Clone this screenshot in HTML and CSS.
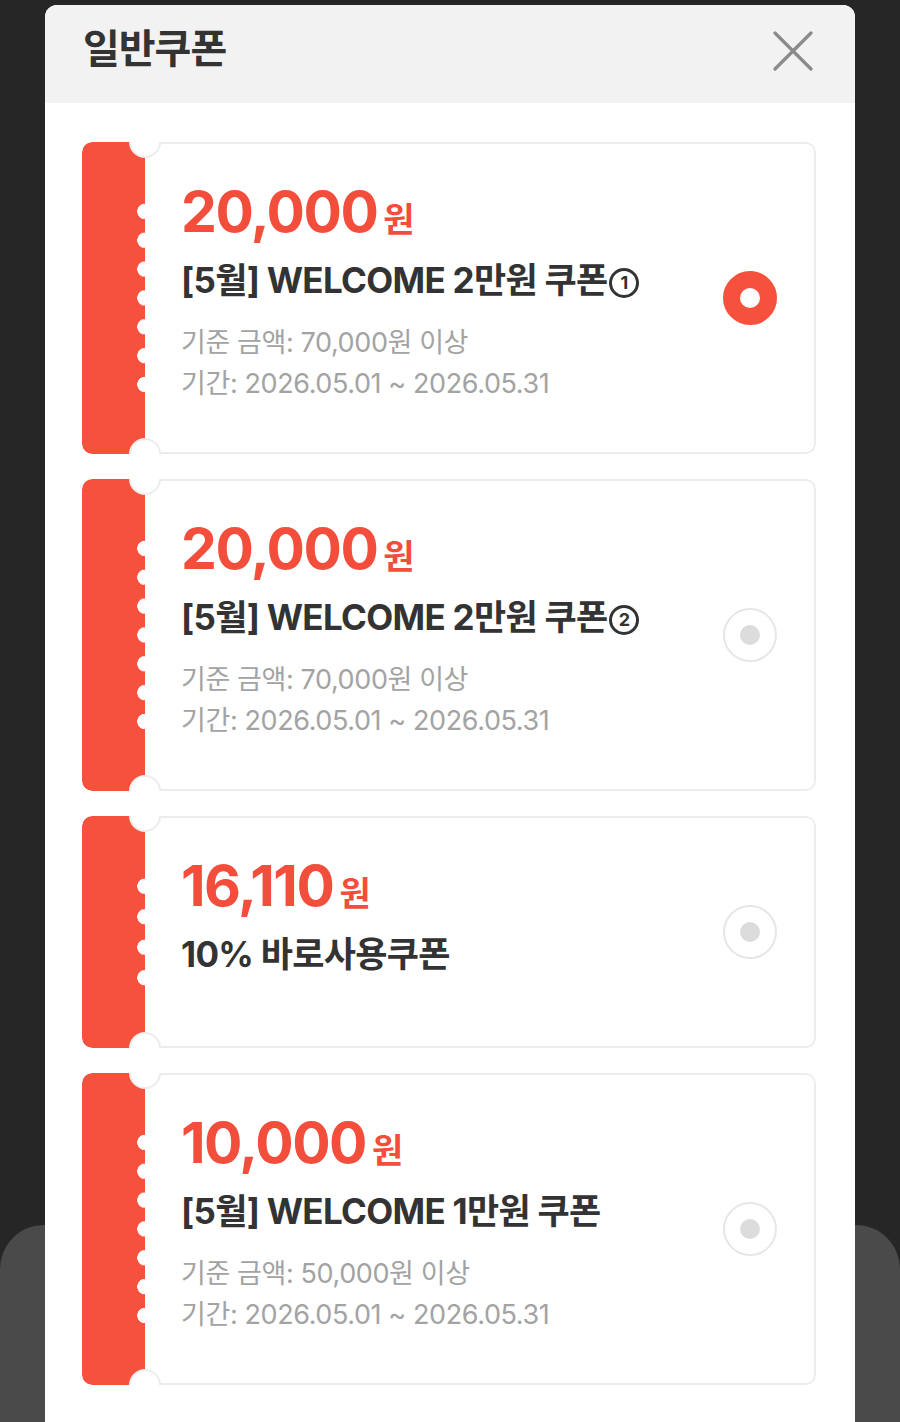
FILE: index.html
```html
<!DOCTYPE html>
<html lang="ko">
<head>
  <meta charset="UTF-8" />
  <meta name="viewport" content="width=device-width, initial-scale=1.0"/>
  <title>일반쿠폰</title>
  <link rel="stylesheet" href="styles.css">
</head>
<body>
  <div class="sheet-behind"></div>

  <div class="modal">
    <header class="modal-header">
      <h2>일반쿠폰</h2>
      <button class="close-btn" aria-label="닫기">
        <svg width="40" height="40" viewBox="0 0 40 40">
          <path d="M2 2 L38 38 M38 2 L2 38" stroke="#8a8a8a" stroke-width="3.2" stroke-linecap="round" fill="none"/>
        </svg>
      </button>
    </header>

    <div class="coupon-list">
      <label class="coupon">
        <div class="stub"></div>
        <div class="coupon-body">
          <div class="coupon-info">
            <div class="amount">20,000<span class="won">원</span></div>
            <div class="coupon-name">[5월] WELCOME 2만원 쿠폰<span class="circled">1</span></div>
            <div class="coupon-meta">
              <p>기준 금액: 70,000원 이상</p>
              <p>기간: 2026.05.01 ~ 2026.05.31</p>
            </div>
          </div>
          <span class="radio checked"></span>
        </div>
      </label>

      <label class="coupon">
        <div class="stub"></div>
        <div class="coupon-body">
          <div class="coupon-info">
            <div class="amount">20,000<span class="won">원</span></div>
            <div class="coupon-name">[5월] WELCOME 2만원 쿠폰<span class="circled">2</span></div>
            <div class="coupon-meta">
              <p>기준 금액: 70,000원 이상</p>
              <p>기간: 2026.05.01 ~ 2026.05.31</p>
            </div>
          </div>
          <span class="radio"></span>
        </div>
      </label>

      <label class="coupon">
        <div class="stub"></div>
        <div class="coupon-body">
          <div class="coupon-info">
            <div class="amount">16,110<span class="won">원</span></div>
            <div class="coupon-name">10% 바로사용쿠폰</div>
            <div class="coupon-meta"></div>
          </div>
          <span class="radio"></span>
        </div>
      </label>

      <label class="coupon">
        <div class="stub"></div>
        <div class="coupon-body">
          <div class="coupon-info">
            <div class="amount">10,000<span class="won">원</span></div>
            <div class="coupon-name">[5월] WELCOME 1만원 쿠폰</div>
            <div class="coupon-meta">
              <p>기준 금액: 50,000원 이상</p>
              <p>기간: 2026.05.01 ~ 2026.05.31</p>
            </div>
          </div>
          <span class="radio"></span>
        </div>
      </label>
    </div>
  </div>
</body>
</html>
```

FILE: styles.css
```css
body {
  margin: 0;
  height: 1422px;
  overflow: hidden;
  position: relative;
  background: #262626;
  font-family: Inter, "Noto Sans CJK KR", sans-serif;
  color: #333;
}

.sheet-behind {
  position: absolute;
  left: 0;
  right: 0;
  top: 1225px;
  bottom: -40px;
  background: #4a4a4a;
  border-radius: 44px 44px 0 0;
}

.modal {
  position: relative;
  margin: 5px 45px 0;
  height: 1417px;
  background: #fff;
  border-radius: 12px 12px 0 0;
  overflow: hidden;
}

.modal-header {
  height: 98px;
  background: #f2f2f2;
  display: flex;
  justify-content: space-between;
  align-items: center;
  padding: 0 42px 0 38px;
}

.modal-header h2 {
  margin: 0 0 11px;
  font-size: 40px;
  line-height: 48px;
  font-weight: 700;
  letter-spacing: -1px;
  color: #333;
}

.close-btn {
  background: none;
  border: none;
  padding: 0;
  width: 40px;
  height: 40px;
  margin-top: -6px;
  cursor: pointer;
}

.coupon-list {
  padding: 39px 39px 0 37px;
  display: flex;
  flex-direction: column;
  gap: 25px;
}

.coupon {
  display: flex;
  position: relative;
  border-radius: 10px;
  overflow: hidden;
  cursor: pointer;
}

.stub {
  width: 63px;
  flex-shrink: 0;
  background: #f5513d;
  border-radius: 10px 0 0 10px;
  position: relative;
}

/* perforation along the stub edge */
.stub::after {
  content: "";
  position: absolute;
  right: -8px;
  width: 16px;
  top: 55px;
  bottom: 55px;
  background: radial-gradient(circle, #fff 7.5px, transparent 8px);
  background-size: 16px 29px;
  background-repeat: no-repeat round;
}

/* half-circle notches top and bottom */
.coupon::before,
.coupon::after {
  content: "";
  position: absolute;
  left: 47px;
  width: 28px;
  height: 28px;
  border: 2px solid #ececec;
  border-radius: 50%;
  background: #fff;
  z-index: 2;
}

.coupon::before {
  top: -16px;
}

.coupon::after {
  bottom: -16px;
}

.coupon-body {
  flex: 1;
  display: flex;
  align-items: center;
  justify-content: space-between;
  border: 2px solid #ececec;
  border-left: none;
  border-radius: 0 10px 10px 0;
  padding: 0 37px 0 36px;
}

.coupon-info {
  padding: 36px 0 48px;
}

.amount {
  height: 64px;
  font-size: 57px;
  line-height: 64px;
  font-weight: 700;
  letter-spacing: -1.5px;
  color: #f24e3b;
}

.won {
  font-size: 34px;
  line-height: 1;
  margin-left: 6px;
  letter-spacing: 0;
}

.coupon-name {
  height: 44px;
  margin-top: 14px;
  font-size: 35px;
  line-height: 44px;
  font-weight: 700;
  letter-spacing: -0.7px;
  color: #333;
}

.circled {
  display: inline-block;
  width: 24px;
  height: 24px;
  line-height: 24px;
  margin-left: 2px;
  border: 3px solid #333;
  border-radius: 50%;
  font-size: 18px;
  text-align: center;
  letter-spacing: 0;
  vertical-align: 4px;
}

.coupon-meta {
  margin-top: 20px;
}

.coupon-meta:empty {
  margin-top: 22px;
}

.coupon-meta p {
  height: 41px;
  margin: 0;
  font-size: 27px;
  line-height: 41px;
  letter-spacing: -0.4px;
  color: #a3a3a3;
}

.radio {
  width: 54px;
  height: 54px;
  border-radius: 50%;
  border: 2px solid #e6e6e6;
  box-sizing: border-box;
  display: flex;
  align-items: center;
  justify-content: center;
  flex-shrink: 0;
}

.radio::after {
  content: "";
  width: 20px;
  height: 20px;
  border-radius: 50%;
  background: #dcdcdc;
}

.radio.checked {
  background: #f5513d;
  border-color: #f5513d;
}

.radio.checked::after {
  background: #fff;
}
```
